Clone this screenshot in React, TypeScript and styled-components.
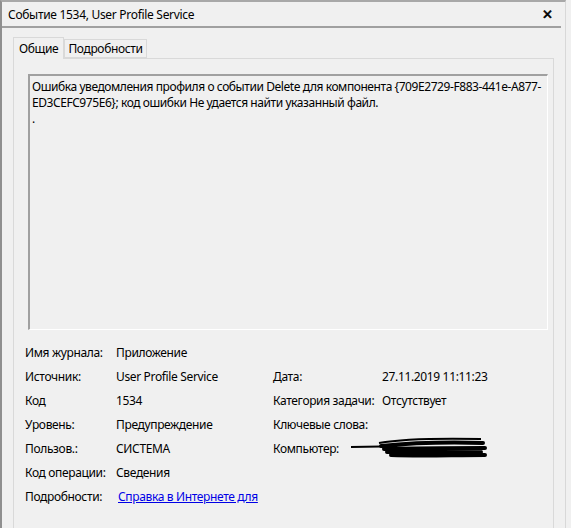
import React from 'react';
import styled, { createGlobalStyle } from 'styled-components';

const GlobalStyle = createGlobalStyle`
  html, body {
    margin: 0;
    padding: 0;
    background: #f0f0f0;
  }
  body {
    font-family: "Noto Sans", "Open Sans", sans-serif;
    font-size: 12px;
    color: #000;
  }
`;

const Window = styled.div`
  width: 566px;
  height: 528px;
  box-sizing: border-box;
  border-left: 2px solid #8f8f8f;
  border-top: 2px solid #a8a8a8;
  border-right: 1px solid #d8d8d8;
  background: #f0f0f0;
  overflow: hidden;
  display: flex;
  flex-direction: column;
`;

const TitleBar = styled.div`
  height: 24px;
  display: flex;
  align-items: center;
  justify-content: space-between;
  padding: 0 8px 0 6px;
  margin-right: 4px;
  border-bottom: 2px solid #a0a0a0;
`;

const Title = styled.span`
  font-size: 12px;
  letter-spacing: -0.3px;
`;

const Close = styled.span`
  font-family: "DejaVu Sans", sans-serif;
  font-weight: bold;
  font-size: 13px;
  -webkit-text-stroke: 0.6px #000;
`;

const Body = styled.div`
  padding: 8px 11px 0 11px;
  flex: 1;
  display: flex;
  flex-direction: column;
`;

const Tabs = styled.div`
  display: flex;
  align-items: flex-end;
  height: 22px;
`;

const Tab = styled.div<{ active?: boolean }>`
  box-sizing: border-box;
  height: ${p => (p.active ? '22px' : '19px')};
  padding: ${p => (p.active ? '0 5px' : '0 3px')};
  margin-bottom: ${p => (p.active ? '-1px' : '0')};
  display: flex;
  align-items: center;
  background: #f0f0f0;
  border: 1px solid #d9d9d9;
  border-bottom: ${p => (p.active ? 'none' : '1px solid #d9d9d9')};
  position: relative;
  z-index: ${p => (p.active ? 1 : 0)};
  letter-spacing: -0.35px;
`;

const Panel = styled.div`
  flex: 1;
  border: 1px solid #d9d9d9;
  border-bottom: none;
  padding: 15px 5px 0 14px;
`;

const Message = styled.div`
  height: 256px;
  box-sizing: border-box;
  border-top: 2px solid #a0a0a0;
  border-left: 2px solid #a0a0a0;
  border-right: 1px solid #ffffff;
  border-bottom: 1px solid #ffffff;
  padding: 3px 2px;
  line-height: 16px;
  letter-spacing: -0.43px;
  white-space: pre;
  overflow: hidden;
`;

const Fields = styled.div`
  display: grid;
  grid-template-columns: 91px 157px 109px 1fr;
  grid-auto-rows: 24px;
  align-items: center;
  margin: 10px 0 0 -3px;
  letter-spacing: -0.35px;
`;

const Cell = styled.span`
  white-space: nowrap;
  display: flex;
  align-items: center;
`;

const Link = styled.a`
  color: #0000e6;
  text-decoration: underline;
  margin-left: 2px;
`;

const Redacted = styled.svg`
  margin-left: -31px;
`;

const Scribble = () => (
  <Redacted width="140" height="24" viewBox="0 0 140 24">
    <path d="M0 11 L30 10.5" stroke="#000" strokeWidth="2" fill="none" />
    <path d="M28 7 C50 3 80 2 130 3" stroke="#000" strokeWidth="2" fill="none" />
    <path d="M30 10 C60 7 100 6 132 7 M33 13 C70 12 100 12 134 12 M36 16 C70 16 100 16 130 16 M40 19 C70 20 100 19 134 19" stroke="#000" strokeWidth="4" fill="none" strokeLinecap="round" />
  </Redacted>
);

const message =
  'Ошибка уведомления профиля о событии Delete для компонента {709E2729-F883-441e-A877-\nED3CEFC975E6}; код ошибки Не удается найти указанный файл.\n.';

const App = () => (
  <>
    <GlobalStyle />
    <Window>
      <TitleBar>
        <Title>Событие 1534, User Profile Service</Title>
        <Close>✕</Close>
      </TitleBar>
      <Body>
        <Tabs>
          <Tab active>Общие</Tab>
          <Tab>Подробности</Tab>
        </Tabs>
        <Panel>
          <Message>{message}</Message>
          <Fields>
            <Cell>Имя журнала:</Cell>
            <Cell>Приложение</Cell>
            <Cell />
            <Cell />

            <Cell>Источник:</Cell>
            <Cell>User Profile Service</Cell>
            <Cell>Дата:</Cell>
            <Cell>27.11.2019 11:11:23</Cell>

            <Cell>Код</Cell>
            <Cell>1534</Cell>
            <Cell>Категория задачи:</Cell>
            <Cell>Отсутствует</Cell>

            <Cell>Уровень:</Cell>
            <Cell>Предупреждение</Cell>
            <Cell>Ключевые слова:</Cell>
            <Cell />

            <Cell>Пользов.:</Cell>
            <Cell>СИСТЕМА</Cell>
            <Cell>Компьютер:</Cell>
            <Cell>
              <Scribble />
            </Cell>

            <Cell>Код операции:</Cell>
            <Cell>Сведения</Cell>
            <Cell />
            <Cell />

            <Cell>Подробности:</Cell>
            <Cell>
              <Link href="#">Справка в Интернете для</Link>
            </Cell>
            <Cell />
            <Cell />
          </Fields>
        </Panel>
      </Body>
    </Window>
  </>
);

export default App;
